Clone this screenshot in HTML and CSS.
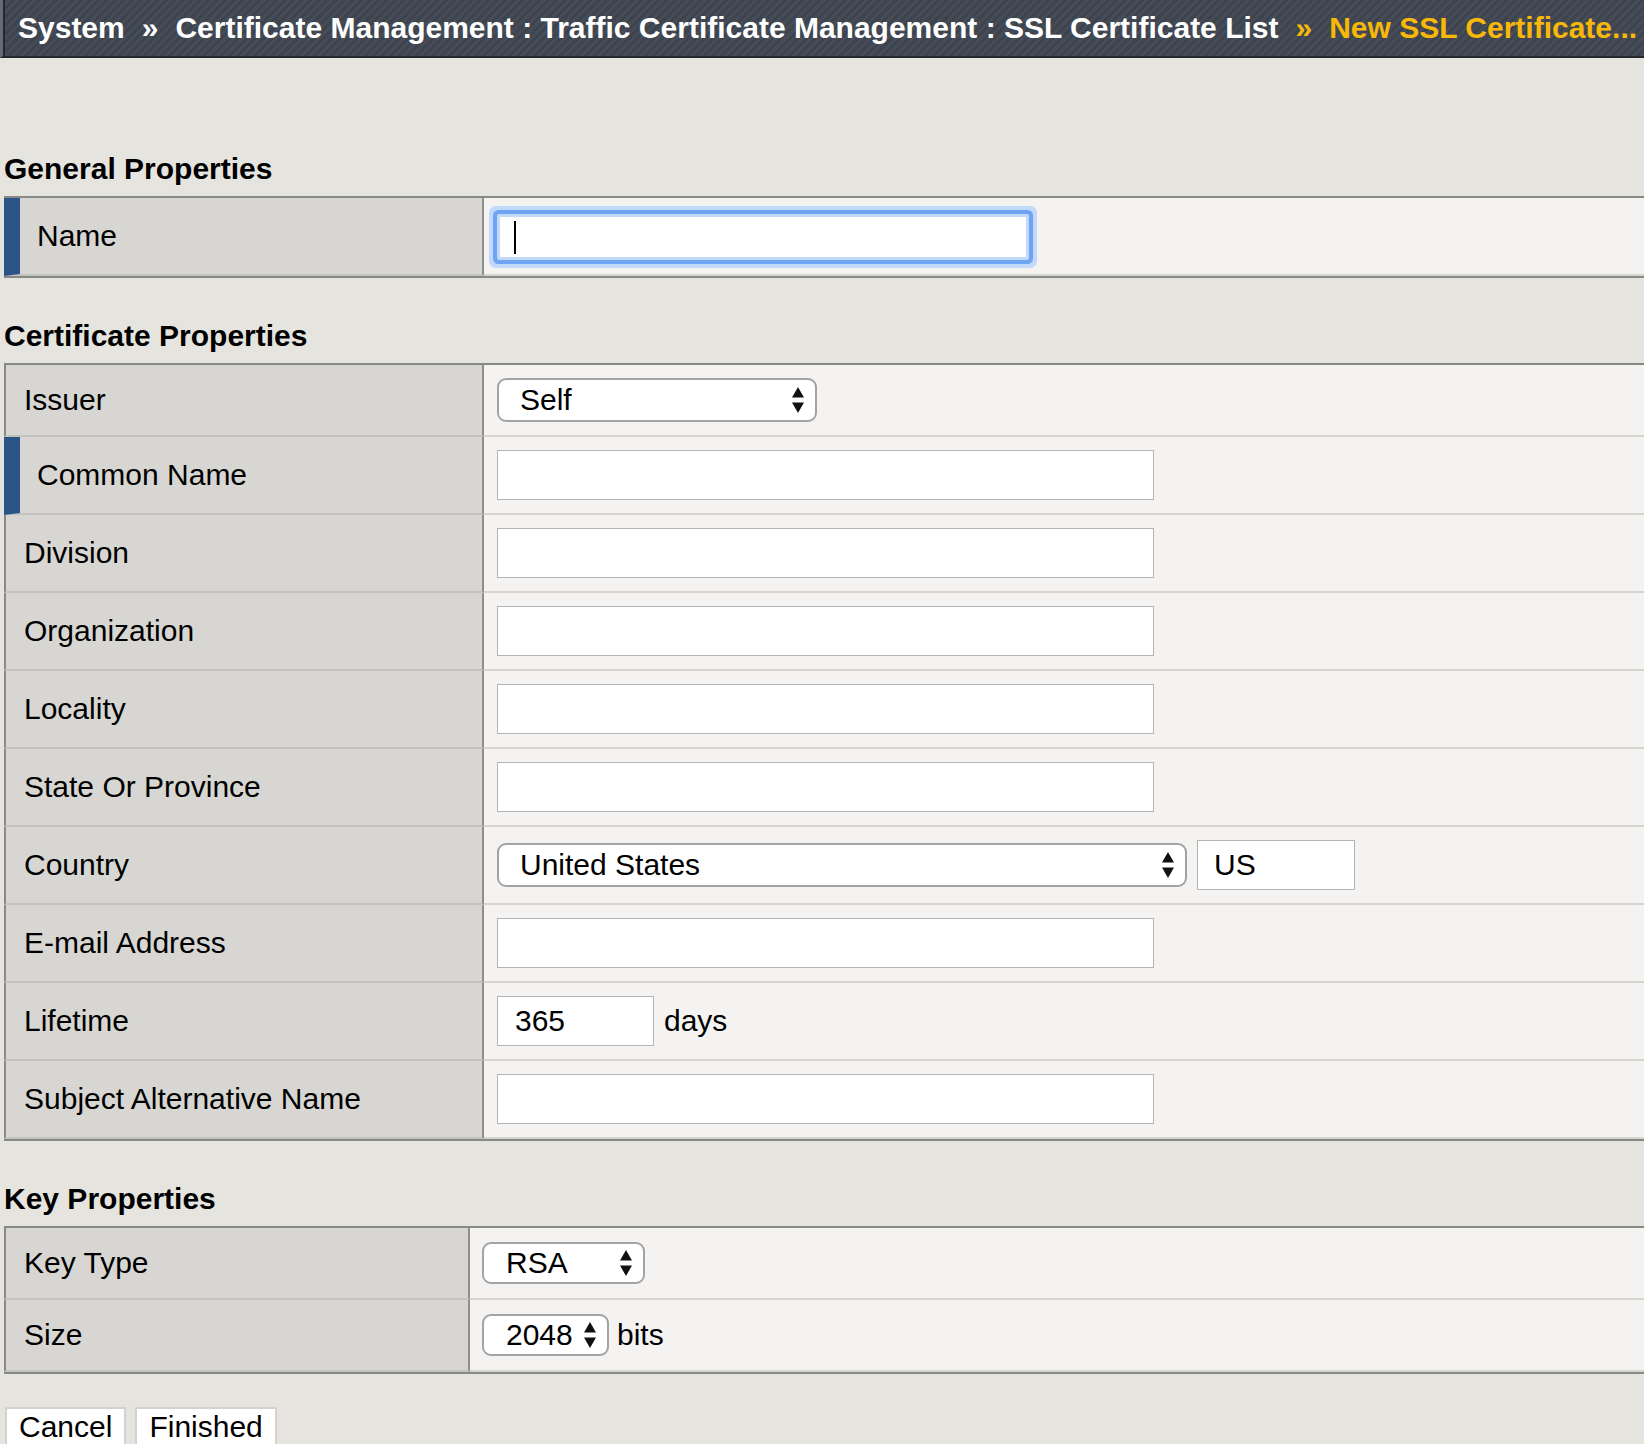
FILE: index.html
```html
<!DOCTYPE html>
<html lang="en">
<head>
<meta charset="utf-8">
<title>New SSL Certificate</title>
<link rel="stylesheet" href="styles.css">
</head>
<body>
<header class="crumbs">
  <span class="crumb">System</span><span class="sep">&raquo;</span><span class="crumb">Certificate Management : Traffic Certificate Management : SSL Certificate List</span><span class="sep hl">&raquo;</span><span class="crumb hl">New SSL Certificate...</span>
</header>

<main class="page">
  <h2 class="section-title">General Properties</h2>
  <div class="props">
    <div class="label req">Name</div>
    <div class="value">
      <div class="input focused"><span class="caret"></span></div>
    </div>
  </div>

  <h2 class="section-title">Certificate Properties</h2>
  <div class="props">
    <div class="label short">Issuer</div>
    <div class="value short">
      <div class="select w-issuer"><span>Self</span><svg class="arrows" viewBox="0 0 12 26" width="12" height="26"><path d="M6 0L12 10.5H0Z"/><path d="M0 15.5H12L6 26Z"/></svg></div>
    </div>

    <div class="label req">Common Name</div>
    <div class="value"><div class="input"></div></div>

    <div class="label">Division</div>
    <div class="value"><div class="input"></div></div>

    <div class="label">Organization</div>
    <div class="value"><div class="input"></div></div>

    <div class="label">Locality</div>
    <div class="value"><div class="input"></div></div>

    <div class="label">State Or Province</div>
    <div class="value"><div class="input"></div></div>

    <div class="label">Country</div>
    <div class="value">
      <div class="select w-country"><span>United States</span><svg class="arrows" viewBox="0 0 12 26" width="12" height="26"><path d="M6 0L12 10.5H0Z"/><path d="M0 15.5H12L6 26Z"/></svg></div>
      <div class="input w-code">US</div>
    </div>

    <div class="label">E-mail Address</div>
    <div class="value"><div class="input"></div></div>

    <div class="label">Lifetime</div>
    <div class="value">
      <div class="input w-days">365</div>
      <span class="unit">days</span>
    </div>

    <div class="label">Subject Alternative Name</div>
    <div class="value"><div class="input"></div></div>
  </div>

  <h2 class="section-title">Key Properties</h2>
  <div class="props key">
    <div class="label">Key Type</div>
    <div class="value">
      <div class="select w-type"><span>RSA</span><svg class="arrows" viewBox="0 0 12 26" width="12" height="26"><path d="M6 0L12 10.5H0Z"/><path d="M0 15.5H12L6 26Z"/></svg></div>
    </div>

    <div class="label">Size</div>
    <div class="value">
      <div class="select w-size"><span>2048</span><svg class="arrows" viewBox="0 0 12 26" width="12" height="26"><path d="M6 0L12 10.5H0Z"/><path d="M0 15.5H12L6 26Z"/></svg></div>
      <span class="unit tight">bits</span>
    </div>
  </div>

  <div class="actions">
    <button class="btn" type="button">Cancel</button>
    <button class="btn" type="button">Finished</button>
  </div>
</main>
</body>
</html>
```

FILE: styles.css
```css
* {
  box-sizing: border-box;
}

html, body {
  margin: 0;
  padding: 0;
}

body {
  background: #e5e4df;
  font-family: "Liberation Sans", Arial, Helvetica, sans-serif;
  font-size: 30px;
  color: #000;
  overflow: hidden;
}

/* ---------- breadcrumb header ---------- */
.crumbs {
  height: 58px;
  line-height: 56px;
  border-left: 3px solid #5f6b7d;
  border-bottom: 2px solid #25282c;
  box-shadow: inset 2px 0 0 #23272c;
  background: repeating-linear-gradient(135deg, #3d444e 0 3px, #454c57 3px 6px);
  padding-left: 15px;
  font-weight: bold;
  color: #fff;
  white-space: nowrap;
  overflow: hidden;
}

.sep {
  margin: 0 17px;
}

.hl {
  color: #f7b80a;
}

/* ---------- page ---------- */
.page {
  padding: 53px 0 0 4px;
}

.section-title {
  margin: 40px 0 9px;
  font-size: 30px;
  line-height: 36px;
  font-weight: bold;
}

.props {
  display: grid;
  grid-template-columns: 480px 1fr;
  border-top: 2px solid #888887;
  border-bottom: 2px solid #888887;
}

.props.key {
  grid-template-columns: 466px 1fr;
}

.label {
  display: flex;
  align-items: center;
  min-height: 78px;
  padding-left: 18px;
  background: #d7d6d2;
  border-left: 2px solid #8a8a89;
  border-right: 2px solid #8e8e8d;
  border-bottom: 2px solid #c3c2be;
}

.label.req {
  border-left: 16px solid #2b5586;
  padding-left: 17px;
}

.value {
  display: flex;
  align-items: center;
  padding: 13px 13px;
  background: #f4f3f1;
  border-bottom: 2px solid #d6d5d2;
}

.label.short,
.value.short {
  min-height: 72px;
}

.key .label,
.key .value {
  min-height: 72px;
  padding-top: 14px;
  padding-bottom: 14px;
}

.key .value {
  padding-left: 12px;
}

/* ---------- inputs ---------- */
.input {
  width: 657px;
  height: 50px;
  background: #fff;
  border: 1px solid #b4b4b4;
  line-height: 48px;
  padding-left: 16px;
}

.input.focused {
  width: 532px;
  height: 46px;
  margin-top: 2px;
  border: 3px solid #c2dafa;
  border-radius: 2px;
  box-shadow: 0 0 0 4px #6fa4f3, 0 0 0 8px #c3d9f9;
  display: flex;
  align-items: center;
  padding-left: 14px;
}

.caret {
  display: block;
  width: 2px;
  height: 33px;
  background: #000;
}

.w-code {
  width: 158px;
  margin-left: 10px;
  padding-left: 16px;
}

.w-days {
  width: 157px;
  padding-left: 17px;
}

.unit {
  margin-left: 10px;
}

.unit.tight {
  margin-left: 8px;
}

.select {
  display: flex;
  align-items: center;
  justify-content: space-between;
  height: 44px;
  padding: 0 11px 0 21px;
  background: #fff;
  border: 2px solid #a3a3a3;
  border-radius: 9px;
}

.key .select {
  height: 42px;
  padding-left: 22px;
}

.arrows {
  display: block;
  fill: #111;
}

.w-issuer {
  width: 320px;
}

.w-country {
  width: 690px;
}

.w-type {
  width: 163px;
}

.w-size {
  width: 127px;
}

/* ---------- buttons ---------- */
.actions {
  display: flex;
  gap: 9px;
  margin-top: 33px;
  padding-left: 1px;
}

.btn {
  font-family: inherit;
  font-size: 30px;
  line-height: 36px;
  height: 48px;
  padding: 0 12px;
  margin: 0;
  background: #fff;
  color: #000;
  border: 2px solid #d3d2ce;
  border-radius: 0;
  display: flex;
  align-items: flex-start;
}
```
